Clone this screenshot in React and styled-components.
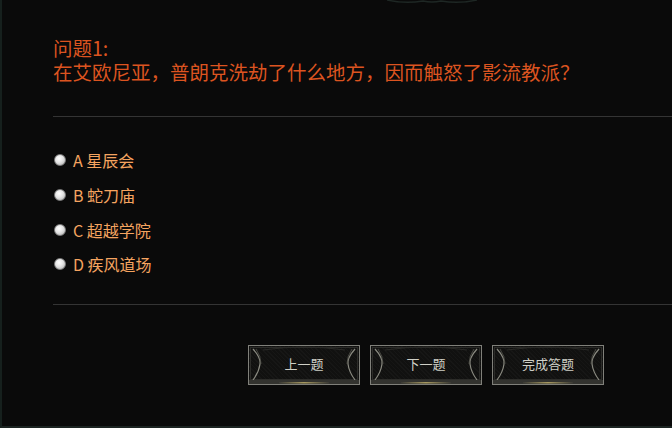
import React from 'react';
import styled, { createGlobalStyle } from 'styled-components';

const GlobalStyle = createGlobalStyle`
  html, body {
    margin: 0;
    padding: 0;
    background: #0a0a0a;
  }
`;

const Page = styled.div`
  position: relative;
  box-sizing: border-box;
  width: 672px;
  height: 428px;
  overflow: hidden;
  background: #0a0a0a;
  border-left: 2px solid #16201d;
  border-bottom: 2px solid #1c2422;
  padding: 36px 0 0 51px;
  font-family: "Noto Sans CJK SC", "Liberation Sans", sans-serif;
`;

const TopOrnament = styled.svg`
  position: absolute;
  top: 0;
  left: 385px;
`;

const Question = styled.div`
  color: #dc5420;
  font-size: 19.5px;
  line-height: 24px;
`;

const QuestionLine = styled.div`
  height: 24px;
`;

const Divider = styled.div`
  height: 1px;
  background: #343434;
  margin-top: ${(p) => p.$top}px;
`;

const Options = styled.div`
  display: flex;
  flex-direction: column;
  margin-top: 26px;
`;

const Option = styled.label`
  display: flex;
  align-items: center;
  height: 34.7px;
  color: #f5a460;
  font-size: 16px;
  cursor: pointer;
`;

const Radio = styled.span`
  box-sizing: border-box;
  width: 12px;
  height: 12px;
  border-radius: 50%;
  margin: 0 7px 0 1px;
  border: 1px solid #7c7c7c;
  background: radial-gradient(circle at 40% 35%, #ffffff 0%, #e4e4e4 45%, #a8a8a8 100%);
`;

const Buttons = styled.div`
  display: flex;
  gap: 10px;
  margin: 40px 0 0 195px;
`;

const Button = styled.button`
  position: relative;
  box-sizing: border-box;
  width: 112px;
  height: 40px;
  padding: 0 0 3px;
  border: 1px solid #80807a;
  background:
    repeating-linear-gradient(45deg, rgba(255,255,255,0.025) 0 1px, transparent 1px 3px),
    #111110;
  color: #cfcfc6;
  font-family: "Noto Sans CJK SC", "Liberation Sans", sans-serif;
  font-size: 13px;
  cursor: pointer;
`;

const Frame = styled.svg`
  position: absolute;
  inset: 0;
  pointer-events: none;
`;

const Label = styled.span`
  position: relative;
`;

function ButtonFrame() {
  return (
    <Frame width="110" height="38" viewBox="0 0 110 38">
      <defs>
        <linearGradient id="gold" x1="0" x2="1">
          <stop offset="0" stopColor="#3a3a35" />
          <stop offset="0.5" stopColor="#a89a60" />
          <stop offset="1" stopColor="#3a3a35" />
        </linearGradient>
      </defs>
      <rect x="1.5" y="1.5" width="107" height="32" fill="none" stroke="#2c2c29" />
      <path d="M4 3 Q12 12 11 18 Q10 26 4 34" fill="none" stroke="#8a8a80" strokeWidth="1.2" />
      <path d="M7 3 Q12 10 12 18" fill="none" stroke="#55554e" strokeWidth="0.8" />
      <path d="M106 3 Q98 12 99 18 Q100 26 106 34" fill="none" stroke="#8a8a80" strokeWidth="1.2" />
      <path d="M103 3 Q98 10 98 18" fill="none" stroke="#55554e" strokeWidth="0.8" />
      <path d="M14 4 Q55 -2 96 4" fill="none" stroke="#2a2a27" strokeWidth="1" />
      <rect x="0" y="34" width="110" height="4" fill="#33332f" />
      <rect x="30" y="36" width="50" height="1.5" fill="url(#gold)" />
    </Frame>
  );
}

const options = ['A 星辰会', 'B 蛇刀庙', 'C 超越学院', 'D 疾风道场'];
const actions = ['上一题', '下一题', '完成答题'];

export default function App() {
  return (
    <>
      <GlobalStyle />
      <Page>
        <TopOrnament width="90" height="4" viewBox="0 0 90 4">
          <path d="M0 0 Q18 4 36 1 Q45 3 54 1 Q72 4 90 0" fill="none" stroke="#1e2724" strokeWidth="1.5" />
        </TopOrnament>
        <Question>
          <QuestionLine>问题1:</QuestionLine>
          <QuestionLine>在艾欧尼亚，普朗克洗劫了什么地方，因而触怒了影流教派？</QuestionLine>
        </Question>
        <Divider $top={32} />
        <Options>
          {options.map((o) => (
            <Option key={o}>
              <Radio />
              {o}
            </Option>
          ))}
        </Options>
        <Divider $top={22} />
        <Buttons>
          {actions.map((a) => (
            <Button key={a}>
              <ButtonFrame />
              <Label>{a}</Label>
            </Button>
          ))}
        </Buttons>
      </Page>
    </>
  );
}
